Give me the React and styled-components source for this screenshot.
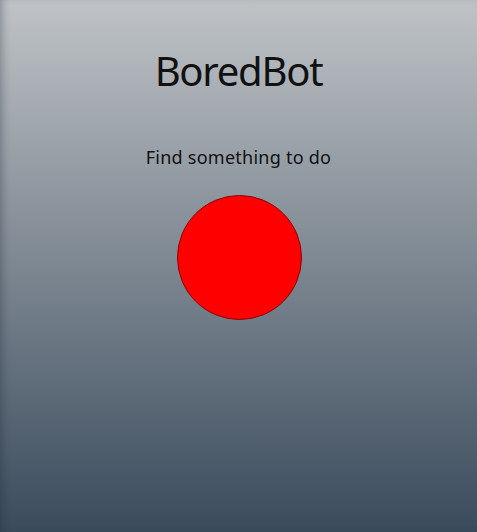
import React from 'react';
import styled, { createGlobalStyle } from 'styled-components';

const GlobalStyle = createGlobalStyle`
	html, body {
		margin: 0;
		padding: 0;
		height: 100%;
	}
	body {
		font-family: 'Noto Sans', 'Open Sans', sans-serif;
	}
	#root {
		height: 100%;
	}
`;

export default function App() {
	return (
		<>
			<GlobalStyle />
			<Page>
				<Title>BoredBot</Title>
				<Subtitle>Find something to do</Subtitle>
				<BigButton aria-label='Find something to do' />
			</Page>
		</>
	);
}

const Page = styled.main`
	min-height: 100%;
	box-sizing: border-box;
	display: flex;
	flex-direction: column;
	align-items: center;
	padding-top: 47px;
	background: linear-gradient(to bottom, #bfc3c6, #3a4b5c);
	box-shadow: inset 6px 0 8px -4px rgba(30, 40, 55, 0.35);
	color: #111;
`;

const Title = styled.h1`
	margin: 0;
	font-size: 40px;
	font-weight: 400;
	line-height: 48px;
	letter-spacing: -1.25px;
`;

const Subtitle = styled.p`
	margin: 50px 0 0;
	font-size: 18px;
	line-height: 24px;
	letter-spacing: 0.25px;
`;

const BigButton = styled.button`
	margin-top: 26px;
	width: 125px;
	height: 125px;
	border-radius: 50%;
	border: 1px solid #8b0000;
	background: red;
	padding: 0;
	cursor: pointer;
	transform: translateX(1px);
`;
